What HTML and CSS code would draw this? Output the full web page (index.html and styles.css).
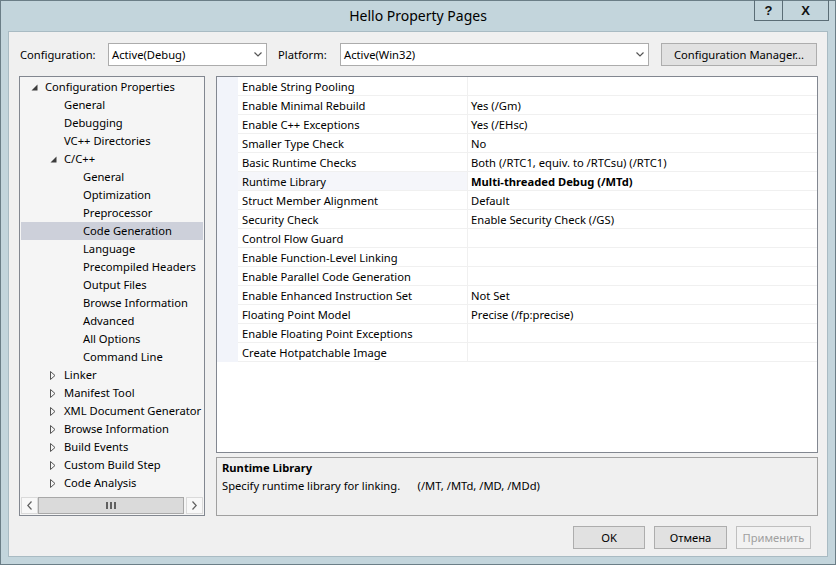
FILE: index.html
```html
<!DOCTYPE html>
<html>
<head>
<meta charset="utf-8">
<title>Hello Property Pages</title>
<link rel="stylesheet" href="styles.css">
</head>
<body>
<div class="window">
  <div class="titlebar">
    <div class="tb-side"></div>
    <div class="tb-title">Hello Property Pages</div>
    <div class="tb-side tb-buttons">
      <div class="tb-btn tb-help">?</div>
      <div class="tb-btn tb-close">X</div>
    </div>
  </div>
  <div class="client">
    <div class="config-row">
      <span class="lbl lbl-config">Configuration:</span>
      <div class="combo combo-config">
        <span>Active(Debug)</span>
        <svg class="chev" width="8" height="5" viewBox="0 0 8 5"><polyline points="0.5,0.5 4,4 7.5,0.5" fill="none" stroke="#555" stroke-width="1.2"/></svg>
      </div>
      <span class="lbl lbl-platform">Platform:</span>
      <div class="combo combo-platform">
        <span>Active(Win32)</span>
        <svg class="chev" width="8" height="5" viewBox="0 0 8 5"><polyline points="0.5,0.5 4,4 7.5,0.5" fill="none" stroke="#555" stroke-width="1.2"/></svg>
      </div>
      <button class="btn btn-cfgmgr">Configuration Manager...</button>
    </div>
    <div class="main">
      <div class="tree">
        <div class="tree-list">
          <div class="node l0"><span class="tog"><svg width="7" height="7" viewBox="0 0 7 7"><polygon points="6.5,0.5 6.5,6.5 0.5,6.5" fill="#3c3c3c"/></svg></span>Configuration Properties</div>
          <div class="node l1"><span class="tog"></span>General</div>
          <div class="node l1"><span class="tog"></span>Debugging</div>
          <div class="node l1"><span class="tog"></span>VC++ Directories</div>
          <div class="node l1"><span class="tog"><svg width="7" height="7" viewBox="0 0 7 7"><polygon points="6.5,0.5 6.5,6.5 0.5,6.5" fill="#3c3c3c"/></svg></span>C/C++</div>
          <div class="node l2"><span class="tog"></span>General</div>
          <div class="node l2"><span class="tog"></span>Optimization</div>
          <div class="node l2"><span class="tog"></span>Preprocessor</div>
          <div class="node l2 sel"><span class="tog"></span>Code Generation</div>
          <div class="node l2"><span class="tog"></span>Language</div>
          <div class="node l2"><span class="tog"></span>Precompiled Headers</div>
          <div class="node l2"><span class="tog"></span>Output Files</div>
          <div class="node l2"><span class="tog"></span>Browse Information</div>
          <div class="node l2"><span class="tog"></span>Advanced</div>
          <div class="node l2"><span class="tog"></span>All Options</div>
          <div class="node l2"><span class="tog"></span>Command Line</div>
          <div class="node l1"><span class="tog"><svg width="6" height="9" viewBox="0 0 6 9"><polygon points="0.5,0.5 5,4.5 0.5,8.5" fill="none" stroke="#555" stroke-width="1"/></svg></span>Linker</div>
          <div class="node l1"><span class="tog"><svg width="6" height="9" viewBox="0 0 6 9"><polygon points="0.5,0.5 5,4.5 0.5,8.5" fill="none" stroke="#555" stroke-width="1"/></svg></span>Manifest Tool</div>
          <div class="node l1"><span class="tog"><svg width="6" height="9" viewBox="0 0 6 9"><polygon points="0.5,0.5 5,4.5 0.5,8.5" fill="none" stroke="#555" stroke-width="1"/></svg></span>XML Document Generator</div>
          <div class="node l1"><span class="tog"><svg width="6" height="9" viewBox="0 0 6 9"><polygon points="0.5,0.5 5,4.5 0.5,8.5" fill="none" stroke="#555" stroke-width="1"/></svg></span>Browse Information</div>
          <div class="node l1"><span class="tog"><svg width="6" height="9" viewBox="0 0 6 9"><polygon points="0.5,0.5 5,4.5 0.5,8.5" fill="none" stroke="#555" stroke-width="1"/></svg></span>Build Events</div>
          <div class="node l1"><span class="tog"><svg width="6" height="9" viewBox="0 0 6 9"><polygon points="0.5,0.5 5,4.5 0.5,8.5" fill="none" stroke="#555" stroke-width="1"/></svg></span>Custom Build Step</div>
          <div class="node l1"><span class="tog"><svg width="6" height="9" viewBox="0 0 6 9"><polygon points="0.5,0.5 5,4.5 0.5,8.5" fill="none" stroke="#555" stroke-width="1"/></svg></span>Code Analysis</div>
        </div>
        <div class="hscroll">
          <div class="sb-btn"><svg width="5" height="9" viewBox="0 0 5 9"><polyline points="4.5,0.5 0.8,4.5 4.5,8.5" fill="none" stroke="#606060" stroke-width="1.2"/></svg></div>
          <div class="sb-thumb"><span class="grip"></span><span class="grip"></span><span class="grip"></span></div>
          <div class="sb-btn"><svg width="5" height="9" viewBox="0 0 5 9"><polyline points="0.5,0.5 4.2,4.5 0.5,8.5" fill="none" stroke="#606060" stroke-width="1.2"/></svg></div>
        </div>
      </div>
      <div class="right">
        <div class="grid">
          <div class="prow"><span class="gut"></span><span class="pname">Enable String Pooling</span><span class="pval"></span></div>
          <div class="prow"><span class="gut"></span><span class="pname">Enable Minimal Rebuild</span><span class="pval">Yes (/Gm)</span></div>
          <div class="prow"><span class="gut"></span><span class="pname">Enable C++ Exceptions</span><span class="pval">Yes (/EHsc)</span></div>
          <div class="prow"><span class="gut"></span><span class="pname">Smaller Type Check</span><span class="pval">No</span></div>
          <div class="prow"><span class="gut"></span><span class="pname">Basic Runtime Checks</span><span class="pval">Both (/RTC1, equiv. to /RTCsu) (/RTC1)</span></div>
          <div class="prow psel"><span class="gut"></span><span class="pname">Runtime Library</span><span class="pval bold">Multi-threaded Debug (/MTd)</span></div>
          <div class="prow"><span class="gut"></span><span class="pname">Struct Member Alignment</span><span class="pval">Default</span></div>
          <div class="prow"><span class="gut"></span><span class="pname">Security Check</span><span class="pval">Enable Security Check (/GS)</span></div>
          <div class="prow"><span class="gut"></span><span class="pname">Control Flow Guard</span><span class="pval"></span></div>
          <div class="prow"><span class="gut"></span><span class="pname">Enable Function-Level Linking</span><span class="pval"></span></div>
          <div class="prow"><span class="gut"></span><span class="pname">Enable Parallel Code Generation</span><span class="pval"></span></div>
          <div class="prow"><span class="gut"></span><span class="pname">Enable Enhanced Instruction Set</span><span class="pval">Not Set</span></div>
          <div class="prow"><span class="gut"></span><span class="pname">Floating Point Model</span><span class="pval">Precise (/fp:precise)</span></div>
          <div class="prow"><span class="gut"></span><span class="pname">Enable Floating Point Exceptions</span><span class="pval"></span></div>
          <div class="prow"><span class="gut"></span><span class="pname">Create Hotpatchable Image</span><span class="pval"></span></div>
        </div>
        <div class="desc">
          <div class="desc-title">Runtime Library</div>
          <div class="desc-text">Specify runtime library for linking.      (/MT, /MTd, /MD, /MDd)</div>
        </div>
      </div>
    </div>
    <div class="button-row">
      <button class="btn btn-dlg">OK</button>
      <button class="btn btn-dlg">Отмена</button>
      <button class="btn btn-dlg btn-disabled">Применить</button>
    </div>
  </div>
</div>
</body>
</html>
```

FILE: styles.css
```css
* { box-sizing: border-box; }
html, body { margin: 0; padding: 0; }
body {
  width: 836px;
  height: 565px;
  overflow: hidden;
  font-family: "Noto Sans", "Open Sans", sans-serif;
  font-size: 11.2px;
  color: #000;
}
.window {
  width: 836px;
  height: 565px;
  border: 1px solid #6b7e87;
  background: #c3d5dc;
  display: flex;
  flex-direction: column;
}
.titlebar {
  height: 30px;
  display: grid;
  grid-template-columns: 1fr auto 1fr;
  align-items: start;
}
.tb-title {
  font-size: 14px;
  line-height: 30px;
  color: #000;
}
.tb-buttons {
  display: flex;
  justify-content: flex-end;
  padding-right: 6px;
}
.tb-btn {
  height: 21px;
  margin-top: -1px;
  border: 1px solid #5b6d76;
  border-top: none;
  display: flex;
  align-items: center;
  justify-content: center;
  font-family: "Liberation Sans", Arial, sans-serif;
  font-weight: bold;
  font-size: 13px;
  color: #111;
}
.tb-help { width: 29px; }
.tb-close { width: 46px; border-left: none; }

.client {
  flex: 1;
  margin: 0 7px 7px 7px;
  background: #f0f0f0;
  border: 1px solid #a9bbc3;
  padding: 11px 9px 7px 10px;
  display: flex;
  flex-direction: column;
}
.config-row {
  height: 23px;
  display: flex;
  align-items: center;
}
.lbl { display: block; }
.lbl-config { width: 89px; padding-left: 1px; }
.lbl-platform { width: 62px; margin-left: 11px; }
.combo {
  height: 23px;
  background: #fff;
  border: 1px solid #acacac;
  display: flex;
  align-items: center;
  justify-content: space-between;
  padding: 0 4px 0 3px;
}
.combo-config { width: 159px; }
.combo-platform { width: 309px; }
.chev { display: block; }
.btn {
  font-family: "Noto Sans", "Open Sans", sans-serif;
  font-size: 11.2px;
  color: #000;
  background: #e1e1e1;
  border: 1px solid #adadad;
  padding: 0;
  height: 23px;
}
.btn-cfgmgr { width: 156px; margin-left: 12px; }

.main {
  margin-top: 10px;
  height: 440px;
  display: flex;
}
.tree {
  width: 186px;
  height: 440px;
  border: 1px solid #828790;
  background: #f5f5f5;
  display: flex;
  flex-direction: column;
  overflow: hidden;
}
.tree-list {
  flex: 1;
  padding-top: 1px;
  white-space: nowrap;
}
.node {
  height: 18px;
  line-height: 18px;
  display: flex;
  align-items: center;
  margin: 0 1px;
}
.node.l0 { padding-left: 10px; }
.node.l1 { padding-left: 29px; }
.node.l2 { padding-left: 48px; }
.tog {
  width: 14px;
  flex: none;
  display: flex;
  align-items: center;
}
.tog svg { display: block; }
.node.sel { background: #cdd0da; }

.hscroll {
  height: 17px;
  margin: 0 1px 1px 1px;
  display: flex;
}
.sb-btn {
  width: 17px;
  height: 17px;
  background: #f8f8f8;
  border: 1px solid #dadada;
  display: flex;
  align-items: center;
  justify-content: center;
}
.sb-thumb {
  width: 146px;
  height: 17px;
  margin-right: 2px;
  background: #dadada;
  border: 1px solid #a8a8a8;
  display: flex;
  align-items: center;
  justify-content: center;
  gap: 2px;
}
.grip {
  width: 2px;
  height: 7px;
  background: #606060;
}

.right {
  margin-left: 11px;
  width: 602px;
  display: flex;
  flex-direction: column;
}
.grid {
  height: 377px;
  border: 1px solid #828790;
  background: #fff;
}
.prow {
  height: 19px;
  display: flex;
  line-height: 18px;
}
.gut {
  width: 21px;
  flex: none;
  background: #f2f4fa;
}
.pname {
  width: 230px;
  flex: none;
  padding-left: 4px;
  padding-top: 1px;
  border-bottom: 1px solid #f0f0f0;
  border-right: 1px solid #f0f0f0;
}
.pval {
  flex: 1;
  padding-left: 3px;
  padding-top: 1px;
  border-bottom: 1px solid #f0f0f0;
}
.psel .pname { background: #f5f6fa; }
.bold { font-weight: bold; }

.desc {
  margin-top: 4px;
  height: 59px;
  border: 1px solid #a0a0a0;
  background: #f0f0f0;
  padding: 1px 5px 2px 5px;
  line-height: 18px;
}
.desc-title { font-weight: bold; }
.desc-text { white-space: pre; }

.button-row {
  margin-top: 10px;
  display: flex;
  justify-content: flex-end;
  gap: 9px;
  padding-right: 7px;
}
.btn-dlg { width: 73px; }
.btn-dlg:first-child { width: 72px; }
.btn-dlg.btn-disabled { width: 75px; }
.btn-disabled {
  color: #a0a0a0;
  background: #f2f2f2;
  border-color: #bfbfbf;
}
```
